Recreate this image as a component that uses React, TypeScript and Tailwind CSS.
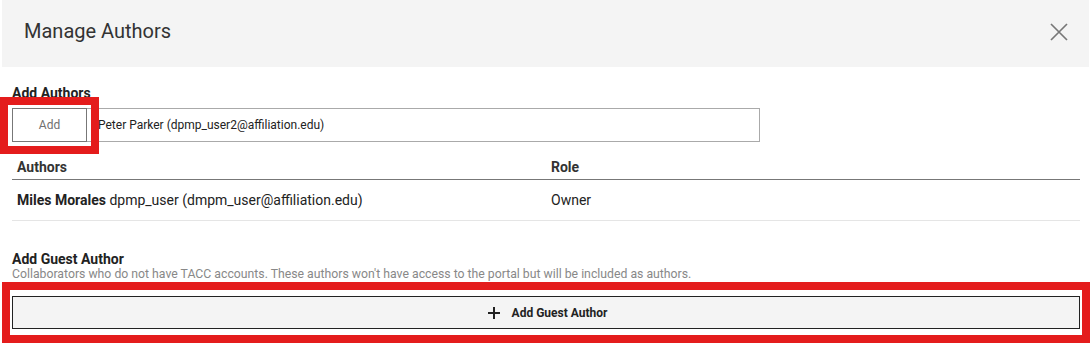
export default function App() {
  return (
    <div className="relative w-[1090px] h-[356px] bg-white font-['Roboto',sans-serif] text-[#333] overflow-hidden">
      {/* Modal header */}
      <div className="ml-[2px] mr-px h-[67px] bg-[#f4f4f4] flex items-center justify-between pl-[22px] pr-[21px] pb-[6px]">
        <h2 className="text-[20px] leading-[24px] text-[#333]">Manage Authors</h2>
        <svg width="18" height="18" viewBox="0 0 18 18" className="text-[#777] mt-[2px]">
          <path d="M1 1 L17 17 M17 1 L1 17" stroke="currentColor" strokeWidth="1.7" fill="none" />
        </svg>
      </div>

      <div className="pl-[12px] pr-[10px]">
        {/* Add authors */}
        <div className="pt-[18px] text-[14px] leading-[16px] font-bold text-[#222]">Add Authors</div>
        <div className="mt-[7px] flex">
          <button className="w-[75px] h-[34px] border border-[#777] bg-white text-[12px] text-[#707070]">Add</button>
          <div className="w-[673px] h-[34px] border border-l-0 border-[#aaa] flex items-center pl-[11px] text-[12px] text-[#222]">
            Peter Parker (dpmp_user2@affiliation.edu)
          </div>
        </div>

        {/* Authors table */}
        <div className="mt-[10px] w-[1068px]">
          <div className="flex border-b border-[#777] pt-[7px] pb-[4px] text-[14px] leading-[16px] font-bold text-[#333]">
            <div className="w-[534px] pl-[5px]">Authors</div>
            <div className="pl-[5px]">Role</div>
          </div>
          <div className="flex items-center h-[41px] border-b border-[#e5e5e5] text-[14px] text-[#222]">
            <div className="w-[534px] pl-[5px]">
              <span className="font-bold">Miles Morales</span> dpmp_user (dmpm_user@affiliation.edu)
            </div>
            <div className="pl-[5px]">Owner</div>
          </div>
        </div>

        {/* Guest author */}
        <div className="mt-[30px] text-[14px] leading-[16px] font-bold text-[#222]">Add Guest Author</div>
        <div className="text-[12.25px] leading-[14px] text-[#888]">
          Collaborators who do not have TACC accounts. These authors won't have access to the portal but will be included as authors.
        </div>
        <button className="mt-[15px] w-[1068px] h-[33px] bg-[#f4f4f4] border border-[#222] flex items-center justify-center gap-[12px] pl-[3px] text-[12px] font-bold text-[#222]">
          <svg width="12" height="12" viewBox="0 0 12 12">
            <path d="M6 0 V12 M0 6 H12" stroke="currentColor" strokeWidth="2" fill="none" />
          </svg>
          <span>Add Guest Author</span>
        </button>
      </div>

      {/* Annotation boxes */}
      <div className="absolute left-0 top-[97px] w-[99px] h-[57px] border-[8px] border-[#e41c1c]" />
      <div className="absolute left-[2px] top-[282px] w-[1088px] h-[61px] border-[8px] border-[#e41c1c]" />
    </div>
  )
}
